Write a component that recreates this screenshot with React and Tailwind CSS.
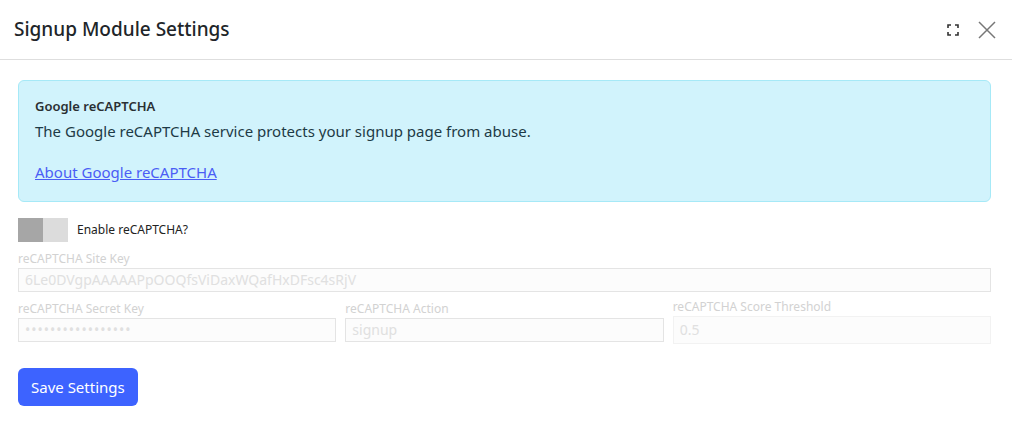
import React from "react";

function ExpandIcon() {
  return (
    <svg width="12" height="12" viewBox="0 0 12 12" fill="none" stroke="#333" strokeWidth="1.6">
      <path d="M1 4V1h3M8 1h3v3M11 8v3H8M4 11H1V8" />
    </svg>
  );
}

function CloseIcon() {
  return (
    <svg width="18" height="18" viewBox="0 0 18 18" fill="none" stroke="#777" strokeWidth="1.5">
      <path d="M1 1l16 16M17 1L1 17" />
    </svg>
  );
}

function Field({ label, value, className = "", inputClass = "" }) {
  return (
    <div className={`flex flex-col ${className}`}>
      <div className="text-[12px] leading-[16px] text-[#d2d2d2]">{label}</div>
      <div
        className={`mt-[1px] h-[24px] border border-[#e4e4e4] bg-[#fcfcfc] px-[6px] text-[14px] leading-[22px] text-[#e0e0e0] ${inputClass}`}
      >
        {value}
      </div>
    </div>
  );
}

export default function App() {
  return (
    <div
      className="h-[426px] w-[1012px] overflow-hidden bg-white text-[#212529]"
      style={{ fontFamily: '"Noto Sans", "Open Sans", sans-serif' }}
    >
      <div className="flex h-[60px] items-center justify-between border-b border-[#dedede] pl-[14px] pr-[16px]">
        <h1 className="text-[19px] font-medium text-[#212529]">Signup Module Settings</h1>
        <div className="flex items-center gap-[19px]">
          <ExpandIcon />
          <CloseIcon />
        </div>
      </div>

      <div className="pl-[18px] pr-[21px] pt-[20px]">
        <div className="rounded-[6px] border border-[#a6e9f7] bg-[#d1f3fc] px-[16px] pb-[17px] pt-[16px] text-[#1d3a46]">
          <div className="text-[13px] font-semibold leading-[18px] text-[#2a2f33]">Google reCAPTCHA</div>
          <div className="mt-[5px] text-[15px] leading-[22px]">
            The Google reCAPTCHA service protects your signup page from abuse.
          </div>
          <a href="#" className="mt-[19px] inline-block text-[15px] leading-[22px] text-[#4a5df5] underline">
            About Google reCAPTCHA
          </a>
        </div>

        <div className="mt-[16px] flex items-center">
          <div className="flex h-[24px] w-[50px]">
            <div className="w-[25px] bg-[#a6a6a6]" />
            <div className="w-[25px] bg-[#dcdcdc]" />
          </div>
          <span className="ml-[9px] text-[12px] text-[#222]">Enable reCAPTCHA?</span>
        </div>

        <Field className="mt-[9px]" label="reCAPTCHA Site Key" value="6Le0DVgpAAAAAPpOOQfsViDaxWQafHxDFsc4sRjV" />

        <div className="mt-[9px] grid grid-cols-3 gap-[9px]">
          <Field label="reCAPTCHA Secret Key" value="•••••••••••••••••" inputClass="text-[10px] tracking-[1px]" />
          <Field label="reCAPTCHA Action" value="signup" />
          <Field
            className="-mt-[2px]"
            label="reCAPTCHA Score Threshold"
            value="0.5"
            inputClass="h-[28px] border-[#f2f2f2] leading-[26px]"
          />
        </div>

        <button className="mt-[24px] rounded-[6px] bg-[#3d63ff] px-[13px] py-[8px] text-[15px] leading-[22px] text-white">
          Save Settings
        </button>
      </div>
    </div>
  );
}
